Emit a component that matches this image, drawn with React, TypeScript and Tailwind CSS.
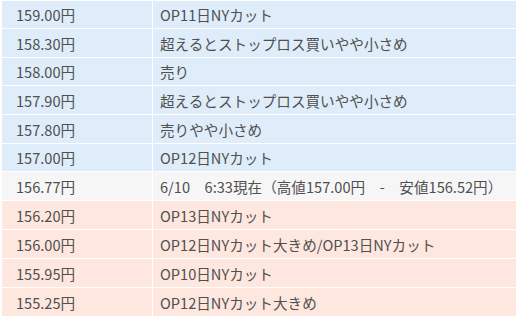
type Row = { price: string; note: string; tone: "buy" | "now" | "sell"; h: string };

const rows: Row[] = [
  { price: "159.00円", note: "OP11日NYカット", tone: "buy", h: "h-[27px]" },
  { price: "158.30円", note: "超えるとストップロス買いやや小さめ", tone: "buy", h: "h-[28px]" },
  { price: "158.00円", note: "売り", tone: "buy", h: "h-[27px]" },
  { price: "157.90円", note: "超えるとストップロス買いやや小さめ", tone: "buy", h: "h-[28px]" },
  { price: "157.80円", note: "売りやや小さめ", tone: "buy", h: "h-[28px]" },
  { price: "157.00円", note: "OP12日NYカット", tone: "buy", h: "h-[27px]" },
  {
    price: "156.77円",
    note: "6/10　6:33現在（高値157.00円　-　安値156.52円）",
    tone: "now",
    h: "h-[28px]",
  },
  { price: "156.20円", note: "OP13日NYカット", tone: "sell", h: "h-[28px]" },
  { price: "156.00円", note: "OP12日NYカット大きめ/OP13日NYカット", tone: "sell", h: "h-[28px]" },
  { price: "155.95円", note: "OP10日NYカット", tone: "sell", h: "h-[28px]" },
  { price: "155.25円", note: "OP12日NYカット大きめ", tone: "sell", h: "h-[28px]" },
];

const toneBg = {
  buy: "bg-[#deedf9]",
  now: "bg-[#f6f6f6]",
  sell: "bg-[#fde7df]",
};

export default function App() {
  return (
    <div
      className="w-[516px] h-[317px] overflow-hidden bg-white pl-[2px] pt-px flex flex-col gap-px text-[14.6px] text-[#505050]"
      style={{ fontFamily: '"Noto Sans CJK JP", "Noto Sans", sans-serif' }}
    >
      {rows.map((r) => (
        <div key={r.price} className={`flex gap-px shrink-0 ${r.h}`}>
          <div className={`w-[150px] shrink-0 flex items-center pl-[14px] pt-px ${toneBg[r.tone]}`}>
            {r.price}
          </div>
          <div className={`flex-1 flex items-center pl-[7px] pt-px whitespace-nowrap ${toneBg[r.tone]}`}>
            {r.note}
          </div>
        </div>
      ))}
    </div>
  );
}
